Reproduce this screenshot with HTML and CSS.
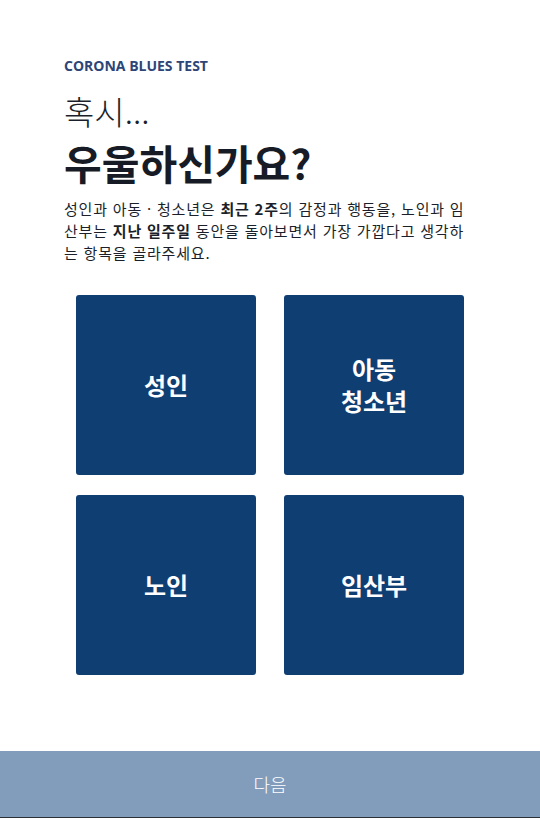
FILE: index.html
```html
<!DOCTYPE html>
<html lang="ko">
<head>
<meta charset="utf-8">
<title>CORONA BLUES TEST</title>
<link rel="stylesheet" href="styles.css">
</head>
<body>
<div class="page">
  <header class="intro">
    <p class="eyebrow">CORONA BLUES TEST</p>
    <h1 class="title">
      <span class="title-light">혹시...</span>
      <span class="title-bold">우울하신가요?</span>
    </h1>
    <p class="lead">성인과 아동 · 청소년은 <strong>최근 2주</strong>의 감정과 행동을, 노인과 임산부는 <strong>지난 일주일</strong> 동안을 돌아보면서 가장 가깝다고 생각하는 항목을 골라주세요.</p>
  </header>
  <main class="choices">
    <button class="choice" type="button">성인</button>
    <button class="choice" type="button">아동<br>청소년</button>
    <button class="choice" type="button">노인</button>
    <button class="choice" type="button">임산부</button>
  </main>
  <footer class="next-bar">
    <button class="next" type="button">다음</button>
  </footer>
</div>
</body>
</html>
```
FILE: styles.css
```css
* {
  box-sizing: border-box;
}

html, body {
  margin: 0;
  padding: 0;
  height: 100%;
  background: #ffffff;
}

body {
  font-family: "Noto Sans CJK KR", "Noto Sans", sans-serif;
  color: #1b1f2a;
}

.page {
  min-height: 818px;
  display: flex;
  flex-direction: column;
  border-bottom: 1px solid #2b2f36;
}

.intro {
  padding: 57px 68px 0 64px;
}

.eyebrow {
  margin: 0;
  font-family: "Open Sans", "Noto Sans", sans-serif;
  font-size: 14px;
  font-weight: 700;
  letter-spacing: 0;
  color: #2d4577;
  line-height: 18px;
}

.title {
  margin: 14px 0 0 0;
  display: flex;
  flex-direction: column;
}

.title-light {
  font-size: 33px;
  font-weight: 300;
  line-height: 44px;
  color: #1b1f2a;
}

.title-bold {
  margin-top: 4px;
  font-size: 41px;
  font-weight: 700;
  line-height: 50px;
  color: #161b26;
}

.lead {
  margin: 11px 0 0 0;
  font-size: 15px;
  letter-spacing: 0.8px;
  line-height: 22px;
  color: #1b1f2a;
}

.lead strong {
  font-weight: 700;
}

.choices {
  margin: 31px auto 0 auto;
  display: grid;
  grid-template-columns: 180px 180px;
  grid-auto-rows: 180px;
  column-gap: 28px;
  row-gap: 20px;
}

.choice {
  border: 0;
  border-radius: 3px;
  background: #0f3e73;
  color: #ffffff;
  font-family: "Noto Sans CJK KR", "Noto Sans", sans-serif;
  font-size: 24px;
  font-weight: 700;
  line-height: 32px;
  padding: 0;
  cursor: pointer;
}

.next-bar {
  margin-top: auto;
}

.next {
  display: block;
  width: 100%;
  height: 66px;
  border: 0;
  background: #819dbb;
  color: #ffffff;
  font-family: "Noto Sans CJK KR", "Noto Sans", sans-serif;
  font-size: 18px;
  font-weight: 300;
  cursor: pointer;
}
```
